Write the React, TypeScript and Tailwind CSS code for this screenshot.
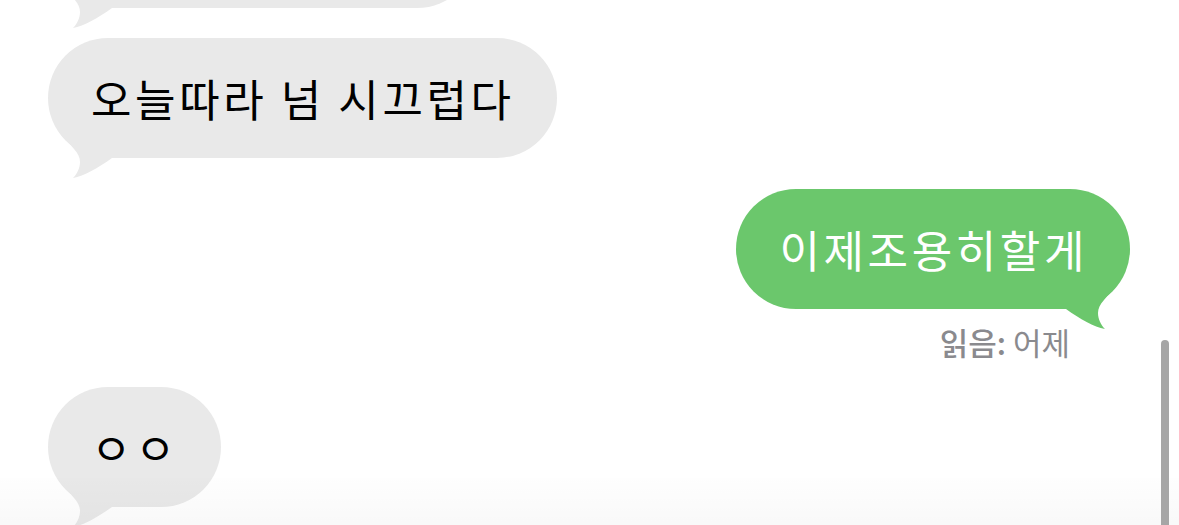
import React from 'react'

type Side = 'left' | 'right'

function Tail({ side, color }: { side: Side; color: string }) {
  return (
    <svg
      width="60"
      height="52"
      viewBox="0 0 60 52"
      className={
        side === 'left'
          ? 'absolute left-[8px] bottom-[-22px]'
          : 'absolute right-[8px] bottom-[-22px] -scale-x-100'
      }
    >
      <path
        d="M2 2 C8 10, 14 16, 18 21 C22 25, 24 30, 24 34 C24 40, 21 46, 17 50 C28 48, 42 40, 56 30 L56 2 Z"
        fill={color}
      />
    </svg>
  )
}

function Bubble({
  side,
  children,
  className = '',
}: {
  side: Side
  children?: React.ReactNode
  className?: string
}) {
  const incoming = side === 'left'
  return (
    <div
      className={
        'relative h-[120px] rounded-[60px] pl-[43px] pr-[42px] flex items-center text-[44px] leading-none tracking-[3.6px] whitespace-nowrap ' +
        (incoming ? 'self-start bg-[#e9e9e9] text-black ' : 'self-end bg-[#6bc76c] text-white ') +
        className
      }
    >
      {children && <span className="relative z-10">{children}</span>}
      <Tail side={side} color={incoming ? '#e9e9e9' : '#6bc76c'} />
    </div>
  )
}

export default function App() {
  return (
    <div
      className="relative w-[1179px] h-[525px] overflow-hidden bg-white"
      style={{ fontFamily: '"Noto Sans CJK KR", "Noto Sans", sans-serif' }}
    >
      <div className="flex flex-col pl-[48px] pr-[49px]">
        {/* previous message, scrolled out of view */}
        <Bubble side="left" className="mt-[-112px] w-[429px]" />

        <Bubble side="left" className="mt-[30px]">
          오늘따라 넘 시끄럽다
        </Bubble>

        <Bubble side="right" className="mt-[31px]">
          이제조용히할게
        </Bubble>

        <div className="self-end mt-[15px] mr-[60px] text-[31px] leading-[36px] text-[#8a8a8e]">
          <span className="font-medium">읽음:</span> 어제
        </div>

        <Bubble side="left" className="mt-[27px]">
          ㅇㅇ
        </Bubble>
      </div>

      {/* input bar fade */}
      <div className="absolute inset-x-0 bottom-0 h-[47px] bg-linear-to-b from-black/[0.005] to-black/[0.025]" />

      {/* scroll indicator */}
      <div className="absolute right-[10px] top-[340px] bottom-0 w-[8px] rounded-t-full bg-[#a6a6a6]" />
    </div>
  )
}
